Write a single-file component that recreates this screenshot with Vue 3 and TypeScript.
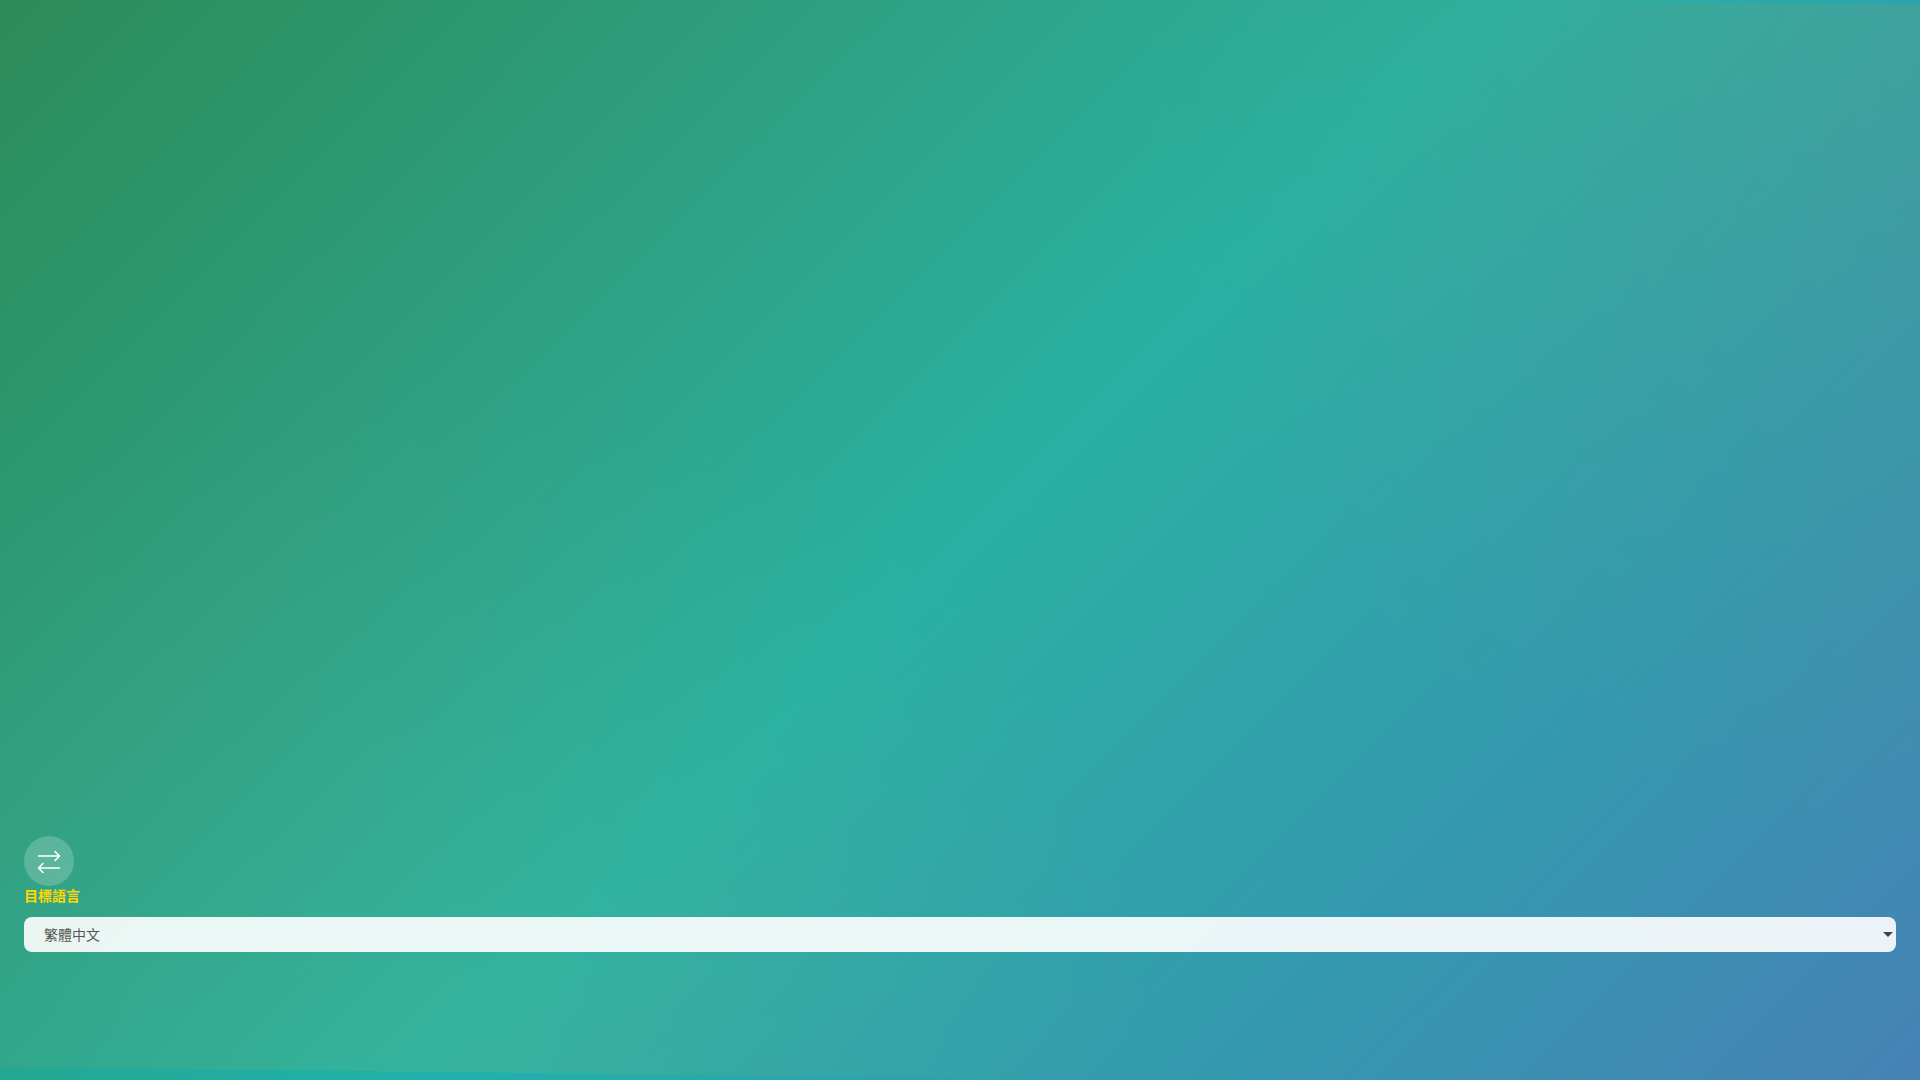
<script setup lang="ts">
import { ref } from 'vue'
const languages = ['繁體中文', '简体中文', 'English', '日本語', '한국어']
const target = ref(languages[0])
</script>

<template>
  <div class="page">
    <div class="tint"></div>
    <div class="controls">
      <button class="swap" type="button" aria-label="swap">
        <svg width="24" height="24" viewBox="0 0 24 24" fill="none" stroke="#fff" stroke-width="1.6" stroke-linecap="round" stroke-linejoin="round">
          <path d="M1.500 7H22.500M18 2.500L22.500 7L18 11.500M22.500 19H1.500M6 14.500L1.500 19L6 23.500" />
        </svg>
      </button>
      <label class="label" for="target">目標語言</label>
      <div class="select-wrap">
        <select id="target" v-model="target" class="select">
          <option v-for="l in languages" :key="l" :value="l">{{ l }}</option>
        </select>
        <span class="caret"></span>
      </div>
    </div>
  </div>
</template>

<style>
html, body { margin: 0; padding: 0; }
</style>

<style scoped>
.page {
  position: relative;
  height: 1080px;
  overflow: hidden;
  display: flex;
  flex-direction: column;
  box-sizing: border-box;
  padding: 836px 24px 0;
  background: linear-gradient(135deg, #2e8b57 0%, #20b2aa 50%, #4682b4 100%);
  font-family: "Noto Sans CJK TC", "Noto Sans CJK SC", sans-serif;
}
.tint {
  position: absolute;
  left: 0;
  right: 0;
  top: -7px;
  height: 1085px;
  transform: rotate(0.68deg);
  pointer-events: none;
  background:
    radial-gradient(circle at 100% 5%, rgba(255, 130, 0, 0.075) 0, rgba(255, 130, 0, 0) 800px),
    radial-gradient(circle at 24% 100%, rgba(255, 225, 90, 0.06) 0, rgba(255, 225, 90, 0) 720px),
    linear-gradient(135deg, rgba(255, 140, 0, 0) 6%, rgba(255, 140, 0, 0.04) 30%, rgba(255, 140, 0, 0.045) 55%, rgba(255, 140, 0, 0) 76%);
}
.controls {
  position: relative;
  display: flex;
  flex-direction: column;
  align-items: flex-start;
}
.swap {
  width: 50px;
  height: 50px;
  padding: 0;
  border: none;
  border-radius: 50%;
  background: rgba(255, 255, 255, 0.2);
  display: flex;
  align-items: center;
  justify-content: center;
}
.label {
  height: 18px;
  line-height: 18px;
  font-size: 14px;
  font-weight: 700;
  color: #ffd700;
}
.select-wrap {
  position: relative;
  margin-top: 13px;
  width: 100%;
  height: 35px;
}
.select {
  display: block;
  width: 100%;
  height: 35px;
  box-sizing: border-box;
  padding: 0 20px 2px;
  border: none;
  border-radius: 8px;
  background: rgba(255, 255, 255, 0.9);
  color: #555;
  font-family: inherit;
  font-size: 14px;
  appearance: none;
}
.caret {
  position: absolute;
  right: 3px;
  top: 15px;
  width: 0;
  height: 0;
  border-left: 5px solid transparent;
  border-right: 5px solid transparent;
  border-top: 5px solid #444;
  pointer-events: none;
}
</style>
